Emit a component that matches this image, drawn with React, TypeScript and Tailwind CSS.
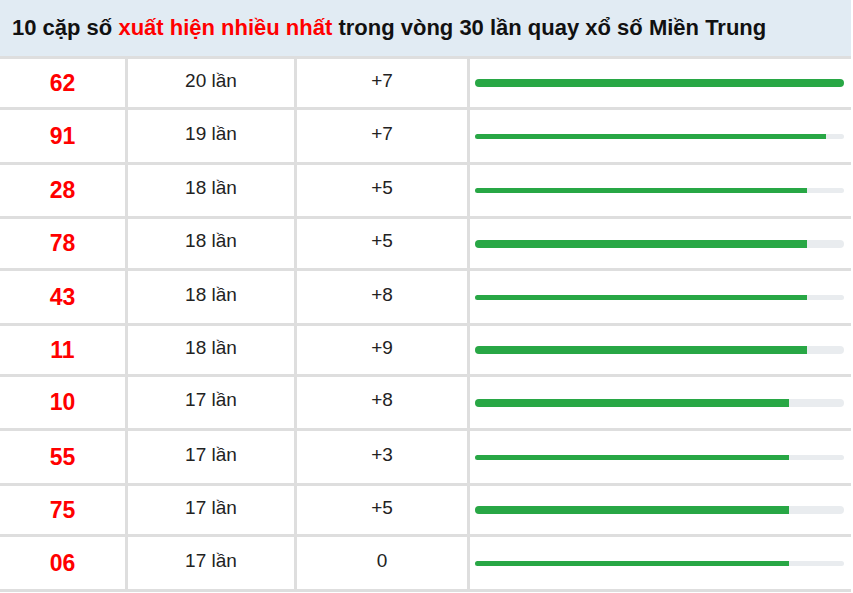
import React from 'react'

interface Row { num: string; count: number; delta: string; h: number; thick: boolean }

const rows: Row[] = [
  { num: '62', count: 20, delta: '+7', h: 48, thick: true },
  { num: '91', count: 19, delta: '+7', h: 52, thick: false },
  { num: '28', count: 18, delta: '+5', h: 51, thick: false },
  { num: '78', count: 18, delta: '+5', h: 49, thick: true },
  { num: '43', count: 18, delta: '+8', h: 52, thick: false },
  { num: '11', count: 18, delta: '+9', h: 48, thick: true },
  { num: '10', count: 17, delta: '+8', h: 51, thick: true },
  { num: '55', count: 17, delta: '+3', h: 52, thick: false },
  { num: '75', count: 17, delta: '+5', h: 48, thick: true },
  { num: '06', count: 17, delta: '0', h: 52, thick: false },
]

const MAX = 20

export default function App() {
  return (
    <div className="w-[853px] h-[593px] bg-white font-['Liberation_Sans',Arial,sans-serif] overflow-hidden">
      <div className="w-[851px]">
        {/* Tiêu đề */}
        <div className="h-[56px] bg-[#e1ebf3] flex items-center pl-3 pb-[2px] text-[22px] font-bold text-[#111]">
          <span>
            10 cặp số <span className="text-[#f00]">xuất hiện nhiều nhất</span> trong vòng 30 lần quay xổ số Miền Trung
          </span>
        </div>

        {rows.map((r) => (
          <div
            key={r.num}
            className="flex border-t-[3px] border-[#dedede]"
            style={{ height: r.h + 3 }}
          >
            <div className="w-[125px] flex items-center justify-center text-[23px] font-bold text-[#f00] border-r-[3px] border-[#dedede] box-content">
              {r.num}
            </div>
            <div className="w-[166px] flex items-center justify-center pb-[4px] text-[19px] text-[#222] border-r-[3px] border-[#dedede] box-content">
              {r.count} lần
            </div>
            <div className="w-[170px] flex items-center justify-center pb-[4px] text-[19px] text-[#222] border-r-[3px] border-[#dedede] box-content">
              {r.delta}
            </div>
            <div className="flex-1 flex items-center pl-[5px] pr-[7px]">
              <div className={(r.thick ? 'h-[8px]' : 'h-[5px]') + ' w-full rounded-full bg-[#e9ecef] overflow-hidden'}>
                <div
                  className="h-full bg-[#28a745]"
                  style={{ width: `${(r.count / MAX) * 100}%` }}
                />
              </div>
            </div>
          </div>
        ))}
        <div className="border-t-[3px] border-[#dedede]" />
      </div>
    </div>
  )
}
